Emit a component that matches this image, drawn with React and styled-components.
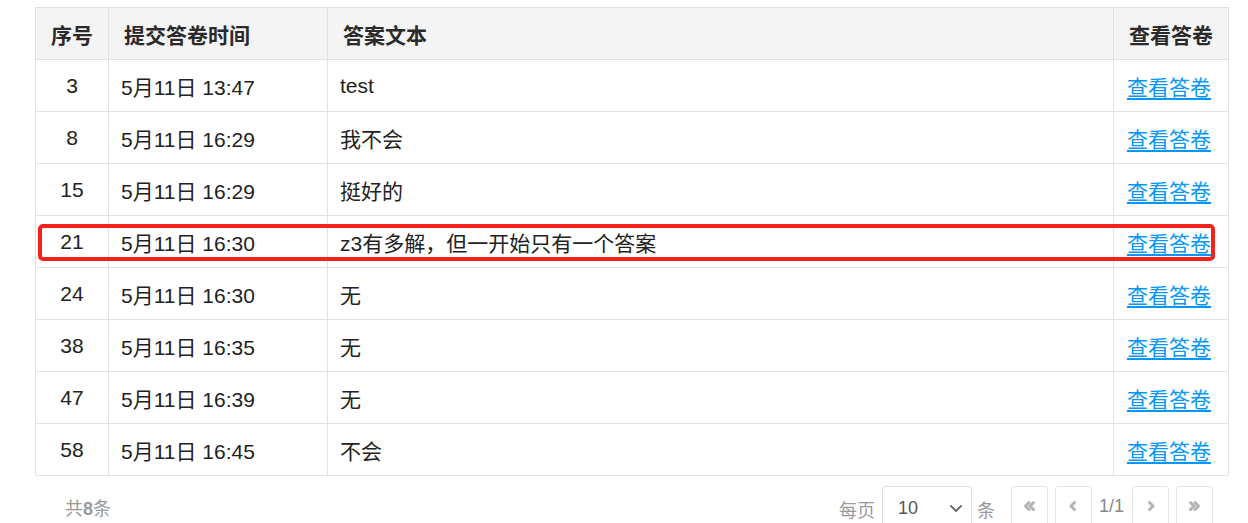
import React from "react";
import styled, { createGlobalStyle } from "styled-components";

const Global = createGlobalStyle`
  html, body { margin: 0; padding: 0; background: #fff; }
  body { font-family: "Liberation Sans", Arial, "Noto Sans CJK SC", sans-serif; }
`;

const Page = styled.div`
  width: 1248px;
  height: 523px;
  overflow: hidden;
  padding: 7px 20px 0 35px;
  box-sizing: border-box;
`;

const TableWrap = styled.div`
  position: relative;
  width: 1193px;
`;

const Table = styled.table`
  width: 1193px;
  border-collapse: collapse;
  table-layout: fixed;
  border: 1px solid #e2e2e2;
  font-size: 21px;
  color: #222;
`;

const Th = styled.th`
  height: 51px;
  background: #f4f4f4;
  border: 1px solid #e2e2e2;
  font-weight: bold;
  color: #2a2a2a;
  text-align: ${(p) => p.$align || "left"};
  padding: 0 ${(p) => (p.$align === "center" ? 0 : 15)}px;
  font-size: 21px;
`;

const Td = styled.td`
  height: 51px;
  border: 1px solid #e2e2e2;
  text-align: ${(p) => p.$align || "left"};
  padding: 0 ${(p) => (p.$align === "center" ? 0 : 12)}px;
  white-space: nowrap;
`;

const Link = styled.a`
  display: inline-block;
  margin-right: 4px;
  color: #0796f5;
  text-decoration: underline;
  text-underline-offset: 3px;
  font-size: 21px;
  cursor: pointer;
`;

const Highlight = styled.div`
  position: absolute;
  left: 3px;
  top: 217px;
  width: 1177px;
  height: 37px;
  box-sizing: border-box;
  border: 4px solid #f5211b;
  border-radius: 5px;
  pointer-events: none;
`;

const Footer = styled.div`
  display: flex;
  align-items: flex-start;
  justify-content: space-between;
  width: 1193px;
  padding: 10px 15px 0 30px;
  box-sizing: border-box;
  color: #999;
  font-size: 18px;
`;

const Total = styled.div`
  margin-top: 8px;
  b { font-weight: bold; }
`;

const Pager = styled.div`
  display: flex;
  align-items: flex-start;
`;

const Label = styled.span`
  margin-top: 10px;
  margin-right: ${(p) => p.$mr || 0}px;
  margin-left: ${(p) => p.$ml || 0}px;
`;

const Select = styled.div`
  width: 90px;
  height: 42px;
  box-sizing: border-box;
  border: 1px solid #dcdcdc;
  border-radius: 4px;
  display: flex;
  align-items: center;
  justify-content: space-between;
  padding: 2px 8px 0 15px;
  color: #555;
  font-size: 18px;
`;

const PageBtn = styled.div`
  width: 37px;
  height: 40px;
  box-sizing: border-box;
  border: 1px solid #e6e6e6;
  border-radius: 3px;
  display: flex;
  align-items: center;
  justify-content: center;
  margin-left: ${(p) => p.$ml || 0}px;
`;

const PageInfo = styled.span`
  margin: 10px 8px 0 7px;
  color: #888;
`;

const rows = [
  ["3", "5月11日 13:47", "test"],
  ["8", "5月11日 16:29", "我不会"],
  ["15", "5月11日 16:29", "挺好的"],
  ["21", "5月11日 16:30", "z3有多解，但一开始只有一个答案"],
  ["24", "5月11日 16:30", "无"],
  ["38", "5月11日 16:35", "无"],
  ["47", "5月11日 16:39", "无"],
  ["58", "5月11日 16:45", "不会"],
];

const Chev = ({ dir = "left", double }) => (
  <svg width="16" height="16" viewBox="0 0 16 16" fill="none" stroke="#b3b3b3" strokeWidth="3" strokeLinecap="round" strokeLinejoin="round">
    {double ? (
      dir === "left" ? (
        <>
          <path d="M8 4.5 L4.5 8 L8 11.5" />
          <path d="M12.5 4.5 L9 8 L12.5 11.5" />
        </>
      ) : (
        <>
          <path d="M3.5 4.5 L7 8 L3.5 11.5" />
          <path d="M8 4.5 L11.5 8 L8 11.5" />
        </>
      )
    ) : dir === "left" ? (
      <path d="M9.5 4.5 L6 8 L9.5 11.5" />
    ) : (
      <path d="M6.5 4.5 L10 8 L6.5 11.5" />
    )}
  </svg>
);

export default function App() {
  return (
    <Page>
      <Global />
      <TableWrap>
        <Table>
          <colgroup>
            <col style={{ width: 73 }} />
            <col style={{ width: 219 }} />
            <col style={{ width: 786 }} />
            <col style={{ width: 115 }} />
          </colgroup>
          <thead>
            <tr>
              <Th $align="center">序号</Th>
              <Th>提交答卷时间</Th>
              <Th>答案文本</Th>
              <Th $align="center">查看答卷</Th>
            </tr>
          </thead>
          <tbody>
            {rows.map((r) => (
              <tr key={r[0]}>
                <Td $align="center">{r[0]}</Td>
                <Td>{r[1]}</Td>
                <Td>{r[2]}</Td>
                <Td $align="center">
                  <Link>查看答卷</Link>
                </Td>
              </tr>
            ))}
          </tbody>
        </Table>
        <Highlight />
      </TableWrap>
      <Footer>
        <Total>
          共<b>8</b>条
        </Total>
        <Pager>
          <Label $mr={7}>每页</Label>
          <Select>
            <span>10</span>
            <svg width="14" height="14" viewBox="0 0 14 14" fill="none" stroke="#666" strokeWidth="1.8" strokeLinecap="round" strokeLinejoin="round">
              <path d="M2 5 L7 10 L12 5" />
            </svg>
          </Select>
          <Label $ml={5} $mr={16}>条</Label>
          <PageBtn><Chev dir="left" double /></PageBtn>
          <PageBtn $ml={7}><Chev dir="left" /></PageBtn>
          <PageInfo>1/1</PageInfo>
          <PageBtn><Chev dir="right" /></PageBtn>
          <PageBtn $ml={7}><Chev dir="right" double /></PageBtn>
        </Pager>
      </Footer>
    </Page>
  );
}
